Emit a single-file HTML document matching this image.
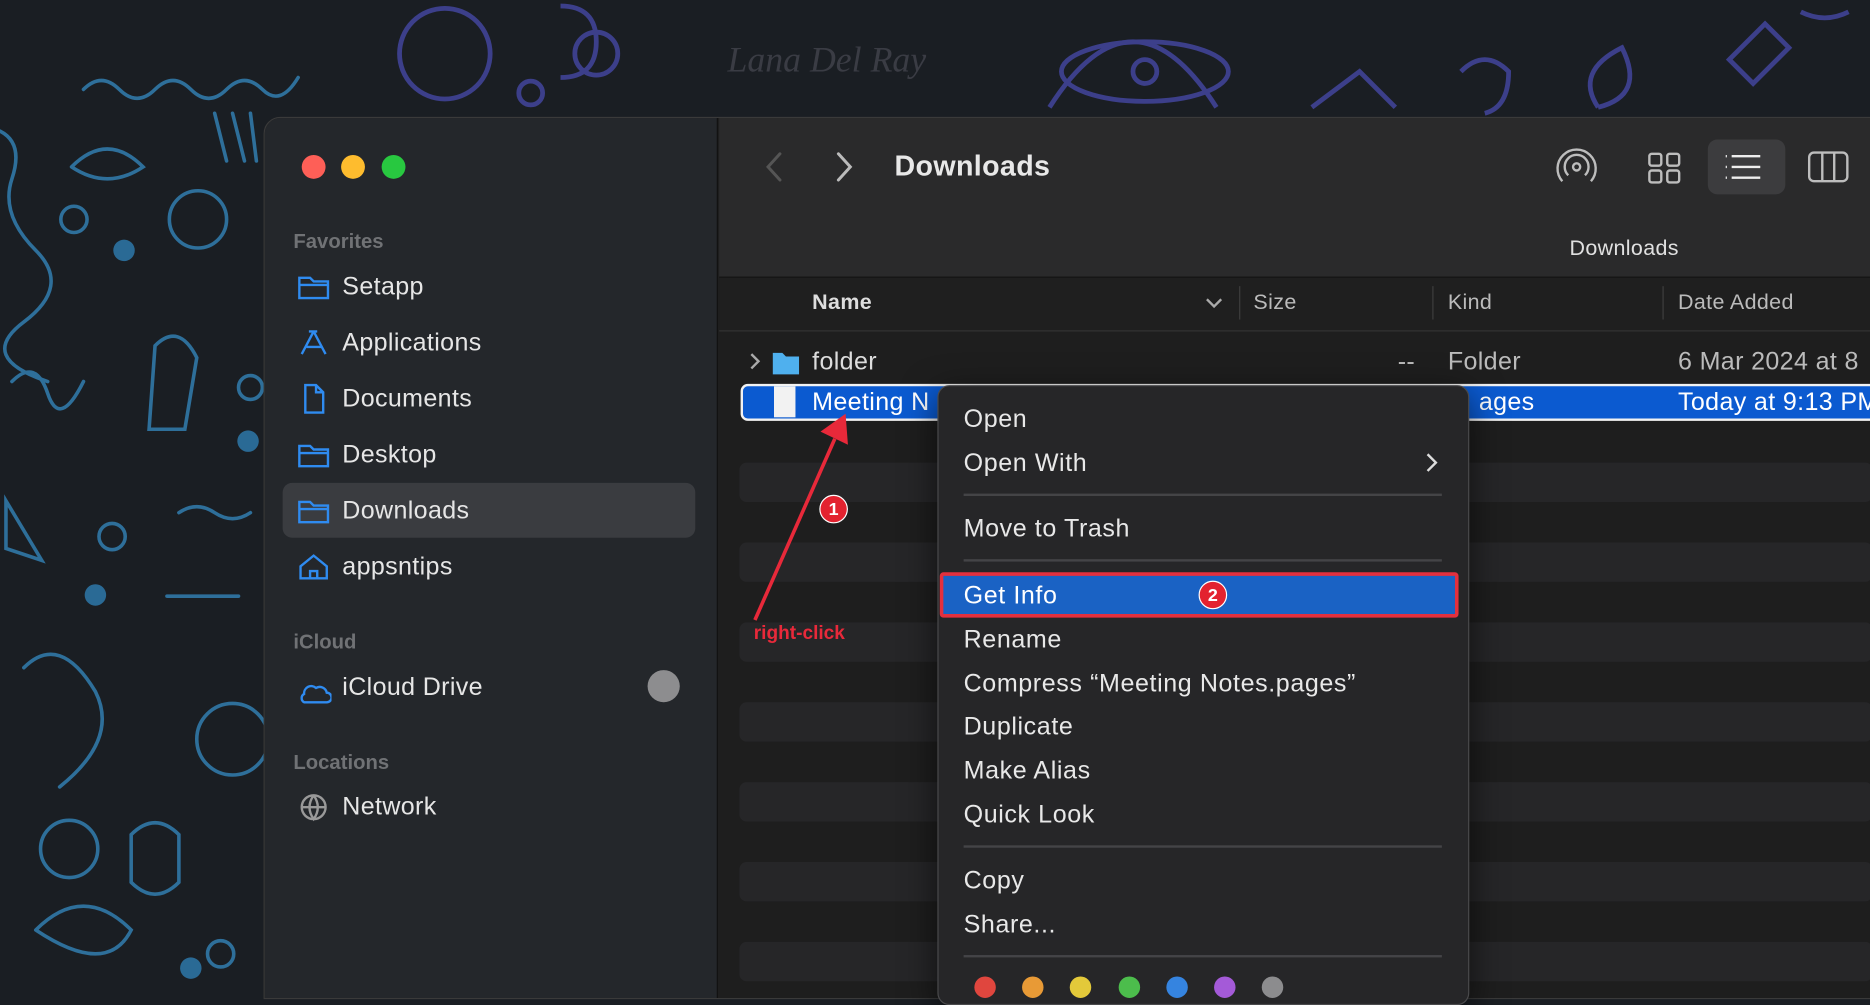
<!DOCTYPE html>
<html><head><meta charset="utf-8"><style>
*{margin:0;padding:0;box-sizing:border-box}
html,body{width:1870px;height:986px;overflow:hidden;background:#1a1e23}
#s{position:absolute;left:0;top:0;width:1568px;height:827px;transform:scale(1.1926,1.1923);transform-origin:0 0;font-family:"Liberation Sans",sans-serif;color:#e6e6e6}
.a{position:absolute}
.t{position:absolute;font-size:21px;white-space:nowrap;line-height:1;letter-spacing:0.3px}
.lbl{position:absolute;font-size:17px;font-weight:bold;color:#707275;line-height:1}
.mi{position:absolute;left:808px;font-size:21px;line-height:1;color:#e8e8e8;white-space:nowrap;letter-spacing:0.5px}
.sep{position:absolute;left:808px;width:401px;height:2px;background:#444447}
.stripe{position:absolute;left:620px;width:950px;height:33px;background:#262628;border-radius:6px}
.dot{position:absolute;width:18px;height:18px;border-radius:50%;top:819px}
.badge{position:absolute;width:24px;height:24px;border-radius:50%;background:#e3222f;color:#fff;font-size:15px;font-weight:bold;text-align:center;line-height:24px;border:1.5px solid #fff}
</style></head><body><div id="s">
<svg class="a" style="left:0;top:0" width="1568" height="827">
<g fill="none" stroke="#2e6f9a" stroke-width="3" stroke-linecap="round">
<circle cx="166" cy="184" r="24"/><circle cx="62" cy="184" r="11"/><circle cx="94" cy="450" r="11"/><circle cx="58" cy="712" r="24"/><circle cx="185" cy="800" r="11"/><circle cx="210" cy="325" r="10"/>
<path d="M70 75 q15-15 30 0 t30 0 t30 0 t30 0 t30 0 t30-10"/>
<path d="M0 110 q20 10 10 40 t20 60 t-10 60 t20 50"/>
<path d="M5 420 l30 50 l-30-10 z"/><path d="M150 430 q15-10 30 0 t30 0"/>
<path d="M10 320 q20-20 30 10 t30-10"/><path d="M165 620 a30 30 0 1 1 60 0 a30 30 0 1 1 -60 0"/>
<path d="M20 560 q30 -30 60 20 q20 40 -30 80"/><path d="M110 700 q20-20 40 0 v40 q-20 20-40 0 z"/>
<path d="M30 780 q40-40 80 0 q-20 40-80 0"/><path d="M130 290 q20-20 35 10 l-10 60 h-30 z"/>
<path d="M60 140 q30-30 60 0 q-30 20-60 0"/><path d="M140 500 h60"/><path d="M180 95 l10 40 M195 95 l10 40 M210 95 l5 40"/>
</g>
<g fill="#2a6a95"><circle cx="104" cy="210" r="9"/><circle cx="80" cy="499" r="9"/><circle cx="160" cy="812" r="9"/><circle cx="208" cy="370" r="9"/></g>
<g fill="none" stroke="#3c3f8a" stroke-width="4">
<circle cx="373" cy="45" r="38"/><circle cx="445" cy="78" r="10"/><path d="M470 5 q30 0 30 30 q0 30-30 30"/><circle cx="500" cy="45" r="18"/>
<path d="M880 90 q70-110 140 0"/><ellipse cx="960" cy="60" rx="70" ry="25"/><circle cx="960" cy="60" r="10"/>
<path d="M1100 90 l40-30 l30 30"/><path d="M1225 60 q20-20 40 0 q0 30-20 35"/><path d="M1340 90 q-20-30 20-50 q20 40-20 50"/>
<path d="M1450 50 l30-30 l20 20 l-30 30 z"/><path d="M1510 10 q20 10 40 0"/>
</g>
<text x="610" y="60" fill="#3a3c44" font-family="Liberation Serif" font-style="italic" font-size="30">Lana Del Ray</text>
</svg>
<div class="a" style="left:221px;top:98px;width:1360px;height:740px;border-radius:14px 0 0 0;background:#1e1e1e;overflow:hidden;border:1px solid #3a3a3a">
 <div class="a" style="left:0;top:0;width:380px;height:740px;background:#24272b;border-right:1px solid #111"></div>
 <div class="a" style="left:381px;top:0;width:980px;height:134px;background:#2a2a2b;border-bottom:1px solid #111"></div>
 <div class="a" style="left:381px;top:134px;width:980px;height:45px;background:#1f1f1f;border-bottom:1px solid #333"></div>
</div>
<div class="a" style="left:253px;top:130px;width:20px;height:20px;border-radius:50%;background:#fe5f57"></div>
<div class="a" style="left:286px;top:130px;width:20px;height:20px;border-radius:50%;background:#febc2e"></div>
<div class="a" style="left:320px;top:130px;width:20px;height:20px;border-radius:50%;background:#28c840"></div>
<div class="lbl" style="left:246px;top:194px">Favorites</div>
<div class="a" style="left:237px;top:405px;width:346px;height:46px;background:#3a3c40;border-radius:8px"></div>
<svg class="a" style="left:248px;top:225px" width="30" height="470" fill="none" stroke="#2f8bf0" stroke-width="2">
<path d="M3 8 h9 l3 3 h12 v14 h-24 z M3 14 h24"/>
<path d="M15 53 l-10 19 M15 53 l10 19 M9 66 h13 M11 53 h7"/>
<path d="M8 98 h9 l6 6 v17 h-15 z M17 98 v6 h6"/>
<path d="M3 149 h9 l3 3 h12 v14 h-24 z M3 155 h24"/>
<path d="M3 196 h9 l3 3 h12 v14 h-24 z M3 202 h24"/>
<path d="M4 250 l11-9 l11 9 v10 h-22 z M12 260 v-6 h6 v6"/>
<path d="M7 357 a6 6 0 0 1 10-5 a6 6 0 0 1 9 4 a4 4 0 0 1 0 8 h-19 a4 4 0 0 1 0-7z"/>
<g stroke="#999"><circle cx="15" cy="452" r="10"/><path d="M5 452 h20 M15 442 q-7 10 0 20 q7-10 0-20"/></g>
</svg>
<div class="t" style="left:287px;top:230px">Setapp</div>
<div class="t" style="left:287px;top:277px">Applications</div>
<div class="t" style="left:287px;top:324px">Documents</div>
<div class="t" style="left:287px;top:371px">Desktop</div>
<div class="t" style="left:287px;top:418px">Downloads</div>
<div class="t" style="left:287px;top:465px">appsntips</div>
<div class="lbl" style="left:246px;top:530px">iCloud</div>
<div class="t" style="left:287px;top:566px">iCloud Drive</div>
<div class="a" style="left:543px;top:562px;width:27px;height:27px;border-radius:50%;background:#8d8d8f"></div>
<div class="lbl" style="left:246px;top:631px">Locations</div>
<div class="t" style="left:287px;top:666px">Network</div>
<svg class="a" style="left:630px;top:120px" width="100" height="40" fill="none" stroke-width="2.5" stroke-linecap="round"><path d="M24 9 l-10 11 l10 11" stroke="#555"/><path d="M73 9 l10 11 l-10 11" stroke="#bbb"/></svg>
<div class="t" style="left:750px;top:128px;font-size:24px;font-weight:bold;color:#e8e8e8">Downloads</div>
<div class="a" style="left:1432px;top:117px;width:65px;height:46px;background:#3c3c3e;border-radius:8px"></div>
<svg class="a" style="left:1300px;top:118px" width="260" height="44" fill="none" stroke="#bdbdbd" stroke-width="2">
<circle cx="22" cy="22" r="3"/><path d="M15 29 a10 10 0 1 1 14 0 M10 34 a16 16 0 1 1 24 0"/>
<rect x="83" y="11" width="10" height="10" rx="2"/><rect x="98" y="11" width="10" height="10" rx="2"/><rect x="83" y="25" width="10" height="10" rx="2"/><rect x="98" y="25" width="10" height="10" rx="2"/>
<path d="M152 13 h24 M152 22 h24 M152 31 h24 M147 13 h1 M147 22 h1 M147 31 h1" stroke="#eee"/>
<rect x="217" y="10" width="32" height="24" rx="4"/><path d="M228 10 v24 M238 10 v24"/>
</svg>
<div class="t" style="left:1316px;top:199px;font-size:18px;color:#e0e0e0">Downloads</div>
<div class="t" style="left:681px;top:244px;font-size:18px;font-weight:bold;color:#ddd">Name</div>
<svg class="a" style="left:1010px;top:248px" width="16" height="12" fill="none" stroke="#aaa" stroke-width="2"><path d="M2 3 l6 6 l6-6"/></svg>
<div class="a" style="left:1039px;top:240px;width:1px;height:28px;background:#3e3e3e"></div>
<div class="t" style="left:1051px;top:244px;font-size:18px;color:#bbb">Size</div>
<div class="a" style="left:1201px;top:240px;width:1px;height:28px;background:#3e3e3e"></div>
<div class="t" style="left:1214px;top:244px;font-size:18px;color:#bbb">Kind</div>
<div class="a" style="left:1394px;top:240px;width:1px;height:28px;background:#3e3e3e"></div>
<div class="t" style="left:1407px;top:244px;font-size:18px;color:#bbb">Date Added</div>
<div class="stripe" style="top:388px"></div><div class="stripe" style="top:455px"></div><div class="stripe" style="top:522px"></div><div class="stripe" style="top:589px"></div><div class="stripe" style="top:656px"></div><div class="stripe" style="top:723px"></div><div class="stripe" style="top:790px"></div>
<svg class="a" style="left:624px;top:293px" width="50" height="22"><path d="M6 4 l6 6 l-6 6" fill="none" stroke="#aaa" stroke-width="2"/><path d="M24 3 h8 l3 3 h11 v15 h-22 z" fill="#4fb0ee"/></svg>
<div class="t" style="left:681px;top:293px;color:#ddd">folder</div>
<div class="t" style="left:1172px;top:293px;color:#bbb">--</div>
<div class="t" style="left:1214px;top:293px;color:#bbb">Folder</div>
<div class="t" style="left:1407px;top:293px;color:#bbb">6 Mar 2024 at 8</div>
<div class="a" style="left:621px;top:322px;width:960px;height:31px;background:#0b5ad0;border:2.5px solid #f2f2f2;border-radius:6px"></div>
<div class="a" style="left:649px;top:324px;width:18px;height:26px;background:#f2f2f2"></div>
<div class="t" style="left:681px;top:327px;color:#fff">Meeting N</div>
<div class="t" style="left:1240px;top:327px;color:#fff">ages</div>
<div class="t" style="left:1407px;top:327px;color:#fff">Today at 9:13 PM</div>
<div class="a" style="left:786px;top:323px;width:446px;height:520px;background:#262628;border:1px solid #4a4a4c;border-radius:10px;box-shadow:0 8px 30px rgba(0,0,0,.6)"></div>
<div class="mi" style="top:341px">Open</div>
<div class="mi" style="top:378px">Open With</div>
<svg class="a" style="left:1194px;top:378px" width="14" height="20" fill="none" stroke="#ddd" stroke-width="2"><path d="M3 3 l7 7 l-7 7"/></svg>
<div class="sep" style="top:414px"></div>
<div class="mi" style="top:433px">Move to Trash</div>
<div class="sep" style="top:469px"></div>
<div class="a" style="left:788px;top:480px;width:435px;height:38px;background:#1a62c4;border:3px solid #e3303e;border-radius:3px"></div>
<div class="mi" style="top:489px;color:#fff">Get Info</div>
<div class="mi" style="top:526px">Rename</div>
<div class="mi" style="top:563px">Compress “Meeting Notes.pages”</div>
<div class="mi" style="top:599px">Duplicate</div>
<div class="mi" style="top:636px">Make Alias</div>
<div class="mi" style="top:673px">Quick Look</div>
<div class="sep" style="top:709px"></div>
<div class="mi" style="top:728px">Copy</div>
<div class="mi" style="top:765px">Share...</div>
<div class="sep" style="top:801px"></div>
<div class="dot" style="left:817px;background:#e0463e"></div><div class="dot" style="left:857px;background:#e89a36"></div><div class="dot" style="left:897px;background:#e3c93a"></div><div class="dot" style="left:938px;background:#4cbd4c"></div><div class="dot" style="left:978px;background:#3584e0"></div><div class="dot" style="left:1018px;background:#a45ad8"></div><div class="dot" style="left:1058px;background:#8c8c8e"></div>
<svg class="a" style="left:0;top:0" width="1568" height="827"><path d="M633 520 L700 368" stroke="#e8293a" stroke-width="3"/><path d="M688 362 L709 347 L711 373 z" fill="#e8293a"/></svg>
<div class="badge" style="left:687px;top:415px">1</div>
<div class="badge" style="left:1005px;top:487px">2</div>
<div class="t" style="left:632px;top:524px;font-size:16px;font-weight:bold;color:#e8293a;letter-spacing:0">right-click</div>
</div></body></html>
